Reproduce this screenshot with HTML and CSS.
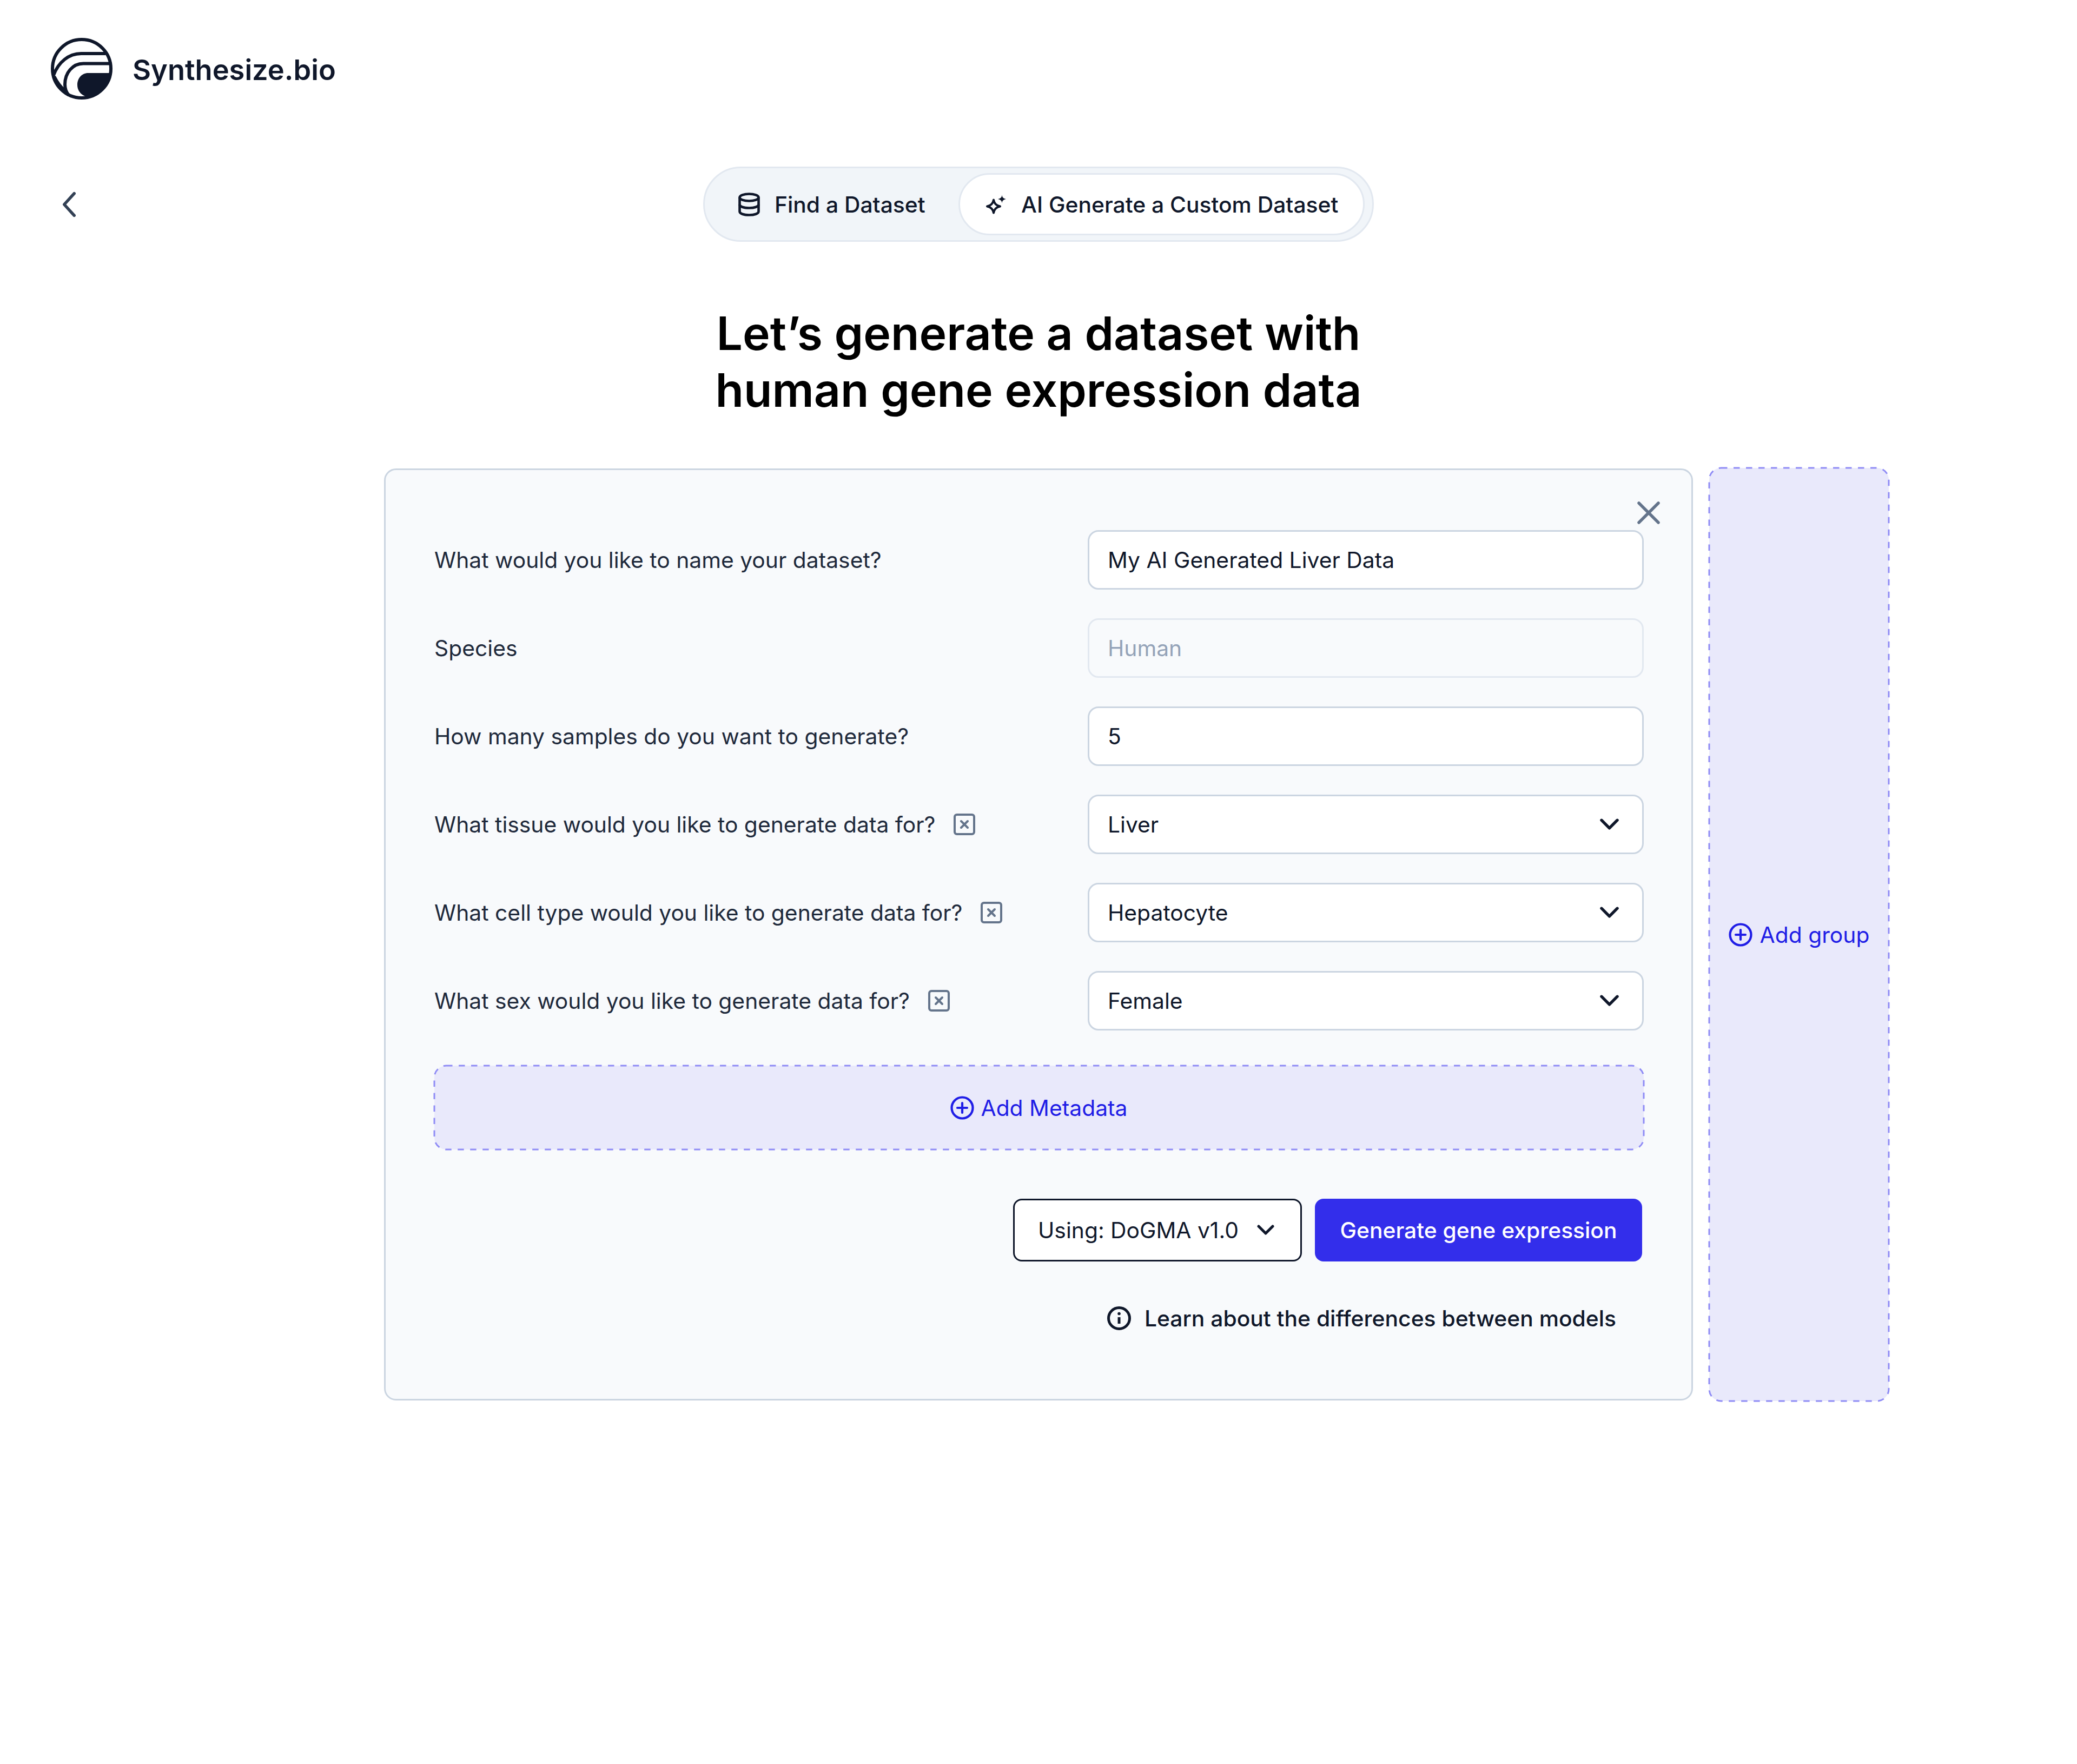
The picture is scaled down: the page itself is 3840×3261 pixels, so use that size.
FILE: index.html
```html
<!DOCTYPE html>
<html lang="en">
<head>
  <meta charset="UTF-8">
  <title>Synthesize.bio</title>
  <link rel="stylesheet" href="styles.css">
</head>
<body>
  <header class="brand">
    <svg class="brand-logo" viewBox="0 0 114 114" fill="none" stroke="#0f172a" stroke-width="6">
      <circle cx="57" cy="57" r="54"/>
      <path d="M101 29H56C33 29 14 45 5 69"/>
      <path d="M7 71C13 83 20 92 28 98" stroke-width="4"/>
      <path d="M109 47.5H60C40 47.5 26 65 26 86C26 94 28 100 33 106"/>
      <path d="M110.5 65H69C57 65 49 75 49 87C49 99 58 108 69 109L66 111A54 54 0 0 0 110.5 65Z" fill="#0f172a" stroke="none"/>
    </svg>
    <span class="brand-name">Synthesize.bio</span>
  </header>

  <div class="toolbar">
    <svg class="back" viewBox="0 0 26 50" fill="none" stroke="#334155" stroke-width="6" stroke-linecap="round" stroke-linejoin="round">
      <path d="M23 3L3 25L23 47"/>
    </svg>
    <div class="tabs">
      <div class="tab">
        <svg class="tab-icon-db" viewBox="0 0 42 44" fill="none" stroke="#0f172a" stroke-width="4.6">
          <ellipse cx="21" cy="9" rx="17.5" ry="6.500"/>
          <path d="M3.500 9V35C3.500 39 11 41.500 21 41.500S38.500 39 38.500 35V9"/>
          <path d="M3.500 22C3.500 26 11 28.500 21 28.500S38.500 26 38.500 22"/>
        </svg>
        Find a Dataset
      </div>
      <div class="tab tab-active">
        <svg class="tab-icon-spark" viewBox="0 0 38 36" fill="none" stroke="#0f172a" stroke-width="4" stroke-linejoin="round">
          <path d="M15 9.500C16 16 19.500 20 27 21.500C19.500 23 16 27 15 33.500C14 27 10.500 23 3 21.500C10.500 20 14 16 15 9.500Z"/>
          <path d="M30.500 0.500C31 5 33 7 38 8C33 9 31 11 30.500 15.500C30 11 28 9 23 8C28 7 30 5 30.500 0.500Z" fill="#0f172a" stroke="none"/>
        </svg>
        AI Generate a Custom Dataset
      </div>
    </div>
  </div>

  <h1 class="title">Let’s generate a dataset with<br>human gene expression data</h1>

  <main class="workspace">
    <section class="card">
      <svg class="card-close" viewBox="0 0 42 42" fill="none" stroke="#64748b" stroke-width="5.5" stroke-linecap="round">
        <path d="M3 3L39 39M39 3L3 39"/>
      </svg>

      <div class="row">
        <label class="row-label">What would you like to name your dataset?</label>
        <input class="field" type="text" value="My AI Generated Liver Data">
      </div>
      <div class="row">
        <label class="row-label">Species</label>
        <input class="field field-disabled" type="text" placeholder="Human" disabled>
      </div>
      <div class="row">
        <label class="row-label">How many samples do you want to generate?</label>
        <input class="field" type="text" value="5">
      </div>
      <div class="row">
        <label class="row-label">What tissue would you like to generate data for?
          <svg class="remove" viewBox="0 0 40 40" fill="none" stroke="#64748b" stroke-width="4" stroke-linecap="round"><rect x="2" y="2" width="36" height="36" rx="4"/><path d="M14 14L26 26M26 14L14 26"/></svg>
        </label>
        <div class="field field-select">Liver
          <svg class="chevron" viewBox="0 0 36 22" fill="none" stroke="#0f172a" stroke-width="5.500" stroke-linecap="round" stroke-linejoin="round"><path d="M3 3L18 18L33 3"/></svg>
        </div>
      </div>
      <div class="row">
        <label class="row-label">What cell type would you like to generate data for?
          <svg class="remove" viewBox="0 0 40 40" fill="none" stroke="#64748b" stroke-width="4" stroke-linecap="round"><rect x="2" y="2" width="36" height="36" rx="4"/><path d="M14 14L26 26M26 14L14 26"/></svg>
        </label>
        <div class="field field-select">Hepatocyte
          <svg class="chevron" viewBox="0 0 36 22" fill="none" stroke="#0f172a" stroke-width="5.500" stroke-linecap="round" stroke-linejoin="round"><path d="M3 3L18 18L33 3"/></svg>
        </div>
      </div>
      <div class="row">
        <label class="row-label">What sex would you like to generate data for?
          <svg class="remove" viewBox="0 0 40 40" fill="none" stroke="#64748b" stroke-width="4" stroke-linecap="round"><rect x="2" y="2" width="36" height="36" rx="4"/><path d="M14 14L26 26M26 14L14 26"/></svg>
        </label>
        <div class="field field-select">Female
          <svg class="chevron" viewBox="0 0 36 22" fill="none" stroke="#0f172a" stroke-width="5.500" stroke-linecap="round" stroke-linejoin="round"><path d="M3 3L18 18L33 3"/></svg>
        </div>
      </div>

      <div class="drop drop-metadata">
        <svg class="drop-outline"><rect width="100%" height="100%" rx="22"/></svg>
        <svg class="plus" viewBox="0 0 44 44" fill="none" stroke="currentColor" stroke-width="4.200" stroke-linecap="round"><circle cx="22" cy="22" r="19.500"/><path d="M22 13V31M13 22H31"/></svg>
        Add Metadata
      </div>

      <div class="actions">
        <button class="btn btn-model">Using: DoGMA v1.0
          <svg class="btn-chevron" viewBox="0 0 32 20" fill="none" stroke="#0f172a" stroke-width="5" stroke-linecap="round" stroke-linejoin="round"><path d="M3 3L16 16L29 3"/></svg>
        </button>
        <button class="btn btn-primary">Generate gene expression</button>
      </div>

      <div class="learn">
        <svg class="info" viewBox="0 0 44 44" fill="none" stroke="#0f172a" stroke-width="5"><circle cx="22" cy="22" r="19.500"/><path d="M22 20V32"/><circle cx="22" cy="13.500" r="2.800" fill="#0f172a" stroke="none"/></svg>
        Learn about the differences between models
      </div>
    </section>

    <aside class="drop drop-group">
      <svg class="drop-outline"><rect width="100%" height="100%" rx="22"/></svg>
      <svg class="plus" viewBox="0 0 44 44" fill="none" stroke="currentColor" stroke-width="4.200" stroke-linecap="round"><circle cx="22" cy="22" r="19.500"/><path d="M22 13V31M13 22H31"/></svg>
      Add group
    </aside>
  </main>
</body>
</html>
```

FILE: styles.css
```css
:root {
  --ink: #0f172a;
  --line: #cbd5e1;
  --blue: #1f1de6;
}
* {
  box-sizing: border-box;
}
body {
  margin: 0;
  min-height: 3261px;
  background: #fff;
  color: var(--ink);
  font-family: 'Inter', 'Noto Sans', sans-serif;
  font-size: 40.8px;
}

/* top */
.brand {
  display: flex;
  align-items: center;
  gap: 37px;
  padding: 70px 0 0 94px;
}
.brand-logo {
  width: 114px;
  height: 114px;
}
.brand-name {
  margin-top: 3px;
  font-size: 52.4px;
  font-weight: 600;
}
.toolbar {
  display: grid;
  grid-template-columns: 1fr auto 1fr;
  align-items: center;
  margin-top: 124px;
}
.back {
  width: 24px;
  height: 48px;
  margin-left: 116px;
}
.tabs {
  display: flex;
  align-items: center;
  justify-content: space-between;
  width: 1240px;
  height: 139px;
  padding: 0 14px 0 61px;
  background: #f1f5f9;
  border: 3px solid #e2e8f0;
  border-radius: 70px;
}
.tab {
  display: flex;
  align-items: center;
  gap: 26px;
  font-weight: 450;
}
.tab-active {
  width: 751px;
  height: 115px;
  gap: 28px;
  padding-left: 47px;
  background: #fff;
  border: 3px solid #e2e8f0;
  border-radius: 58px;
}
.tab-icon-db {
  width: 42px;
  height: 44px;
}
.tab-icon-spark {
  width: 38px;
  height: 36px;
}
.title {
  margin: 117px 0 0;
  font-size: 85.8px;
  font-weight: 620;
  line-height: 105px;
  text-align: center;
  color: #000;
}

/* card + side column */
.workspace {
  display: grid;
  grid-template-columns: 1fr 2420px 1fr;
  column-gap: 30px;
  align-items: start;
  margin-top: 92px;
}
.card {
  grid-column: 2;
  position: relative;
  height: 1723px;
  padding: 111px 88px 0 90px;
  background: #f8fafc;
  border: 3px solid var(--line);
  border-radius: 22px;
}
.card-close {
  position: absolute;
  top: 58px;
  right: 58px;
  width: 42px;
  height: 42px;
}
.row {
  display: grid;
  grid-template-columns: 1208px 1fr;
  align-items: center;
  height: 109px;
  margin-bottom: 54px;
}
.row-label {
  display: flex;
  align-items: center;
  gap: 34px;
  color: #1e293b;
}
.remove {
  width: 40px;
  height: 40px;
}
.field {
  display: flex;
  align-items: center;
  justify-content: space-between;
  width: 100%;
  height: 110px;
  padding: 0 34px;
  background: #fff;
  border: 3px solid var(--line);
  border-radius: 20px;
  color: var(--ink);
  font: inherit;
  outline: none;
}
.field-disabled {
  background: #f8fafc;
  border-color: #e2e8f0;
}
.field-disabled::placeholder {
  color: #94a3b8;
  opacity: 1;
}
.field-select {
  padding-right: 43px;
}
.chevron {
  width: 35px;
  height: 22px;
}

/* dashed add boxes */
.drop {
  position: relative;
  display: flex;
  align-items: center;
  justify-content: center;
  gap: 12px;
  background: #e9e9fb;
  border-radius: 22px;
  color: var(--blue);
}
.drop-outline {
  position: absolute;
  top: 0;
  left: 0;
  width: 100%;
  height: 100%;
  overflow: visible;
}
.drop-outline rect {
  fill: none;
  stroke: #8f8cf5;
  stroke-width: 3;
  stroke-dasharray: 11.5 11.5;
}
.drop-metadata {
  height: 155px;
  margin-top: 66px;
}
.drop-group {
  width: 332px;
  height: 1725px;
  margin-top: -1px;
  gap: 14px;
}
.plus {
  width: 44px;
  height: 44px;
}

/* bottom actions */
.actions {
  display: flex;
  justify-content: flex-end;
  gap: 24px;
  margin-top: 91px;
  padding-right: 3px;
}
.btn {
  display: flex;
  align-items: center;
  height: 116px;
  border-radius: 16px;
  font: inherit;
  font-weight: 450;
  white-space: nowrap;
}
.btn-model {
  width: 534px;
  justify-content: space-between;
  padding: 0 48px 0 43px;
  background: #fff;
  border: 3px solid var(--ink);
  color: var(--ink);
  font-weight: 400;
}
.btn-chevron {
  width: 32px;
  height: 20px;
}
.btn-primary {
  width: 605px;
  justify-content: center;
  padding: 0;
  background: #332eeb;
  border: 0;
  color: #fff;
}
.learn {
  display: flex;
  align-items: center;
  justify-content: flex-end;
  gap: 25px;
  margin-top: 80px;
  padding-right: 51px;
  font-weight: 450;
}
.info {
  width: 44px;
  height: 44px;
}
```
